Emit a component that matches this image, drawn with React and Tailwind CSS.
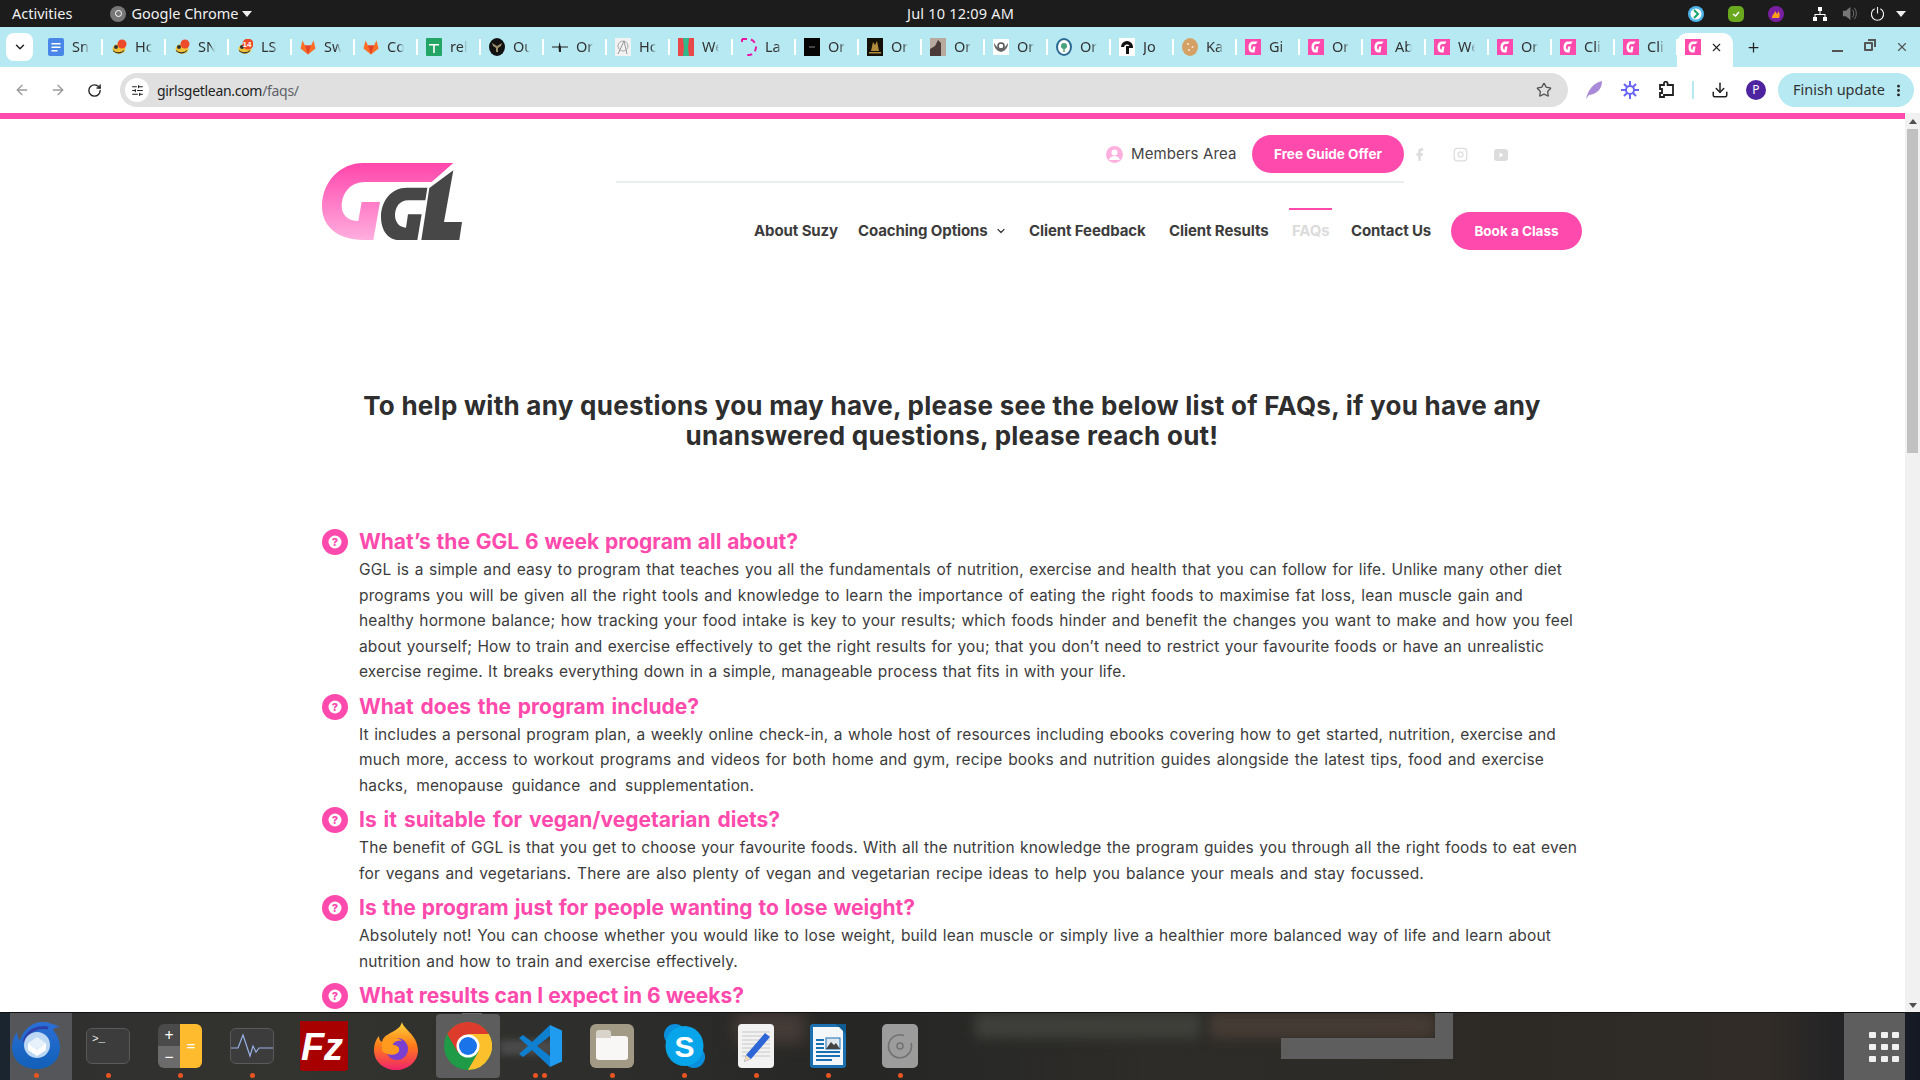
import React from "react";
import { ArrowLeft, ArrowRight, RotateCw, Star, Download, X, Plus, ChevronDown, Facebook, Instagram, EllipsisVertical, SlidersHorizontal } from "lucide-react";

const G = () => (
  <svg width="16" height="16" viewBox="0 0 16 16"><rect width="16" height="16" fill="#ff4aad" /><path d="M12.5 2.5H8C5 2.5 3.5 5 3.5 8.5C3.5 11.5 5 13.5 7.5 13.5H9.5L10.5 7.5H8L7.5 11C6.5 10.5 6 9.500 6 8.500C6 6 7 5 8.500 5H11Z" fill="#fff" /></svg>
);
const Fav = ({ k }) => {
  if (k === "g") return <G />;
  if (k === "doc") return <svg width="16" height="18" viewBox="0 0 16 18"><rect width="16" height="18" rx="2" fill="#4a86e8" /><path d="M3.500 5h9v1.500h-9zM3.500 8.500h9V10h-9zM3.500 12h6v1.500h-6z" fill="#fff" /></svg>;
  if (k === "duck" || k === "duck2" || k === "duck14") return (
    <svg width="16" height="16" viewBox="0 0 16 16"><ellipse cx="8" cy="10" rx="6.500" ry="5" fill="#f0c23a" /><path d="M2 11c3 3 8 3 11 0v1c-3 3.500-8 3-11 0z" fill="#333" /><circle cx="5" cy="8" r="2" fill="#333" />
      <circle cx="11" cy="5" r={k === "duck14" ? 5.500 : 4.500} fill="#ee4b2b" />{k === "duck14" && <text x="10" y="8" fontSize="8" fontFamily="Liberation Sans" fontWeight="700" textAnchor="middle" fill="#fff">14</text>}</svg>
  );
  if (k === "gitlab") return <svg width="16" height="18" viewBox="0 0 16 16"><path d="M8 15.500L.500 9.500 2.500 1.500 5 6.500h6l2.500-5 2 8z" fill="#fc6d26" /><path d="M8 15.500L5 6.500h6z" fill="#e24329" /></svg>;
  if (k === "sheet") return <svg width="16" height="18" viewBox="0 0 16 18"><rect width="16" height="18" rx="1" fill="#23a566" /><path d="M3 6h10v1.500H8.800V15H7.200V7.500H3z" fill="#fff" /></svg>;
  if (k === "y") return <svg width="16" height="18" viewBox="0 0 16 18"><ellipse cx="8" cy="9" rx="8" ry="9" fill="#111" /><path d="M3 5l5 3 5-3-1 3-3 2v4H7v-4L4 8z" fill="#9a8f6a" /></svg>;
  if (k === "plane") return <svg width="16" height="16" viewBox="0 0 16 16"><path d="M0 8h16" stroke="#222" strokeWidth="1" /><path d="M7.500 3L6.500 8.500 7 13h2V8.500z" fill="#222" /></svg>;
  if (k === "sketch") return <svg width="16" height="18" viewBox="0 0 16 18"><rect width="16" height="18" fill="#f2f2f2" /><circle cx="8" cy="8" r="5" fill="none" stroke="#aaa" /><path d="M3 16L9 3l3 13" fill="none" stroke="#999" /></svg>;
  if (k === "we") return <svg width="16" height="18" viewBox="0 0 16 18"><rect width="16" height="18" fill="#e8484a" /><path d="M5 0h6l-1 10 1 8H5l1-8z" fill="#2fb98a" /></svg>;
  if (k === "la") return <svg width="16" height="18" viewBox="0 0 16 18"><path d="M1 1v3M1 1h7a8 8 0 0 1 7 8c0 4-3 8-7 8H3" fill="none" stroke="#e815a5" strokeWidth="2" strokeDasharray="5 4" /></svg>;
  if (k === "black") return <svg width="16" height="18" viewBox="0 0 16 18"><rect width="16" height="18" fill="#050505" /><rect x="5" y="8" width="6" height="2" fill="#444" /></svg>;
  if (k === "gold") return <svg width="16" height="18" viewBox="0 0 16 18"><rect width="16" height="18" fill="#141008" /><path d="M4 13l2-9 2 3 2-4 2 10z" fill="#b08b3c" /><rect x="2" y="14" width="12" height="1.500" fill="#b08b3c" /></svg>;
  if (k === "photo") return <svg width="16" height="18" viewBox="0 0 16 18"><rect width="16" height="18" fill="#b9aaa0" /><path d="M0 18V11l5-3 3-6 3 3v13z" fill="#4a3a38" /></svg>;
  if (k === "wings") return <svg width="16" height="16" viewBox="0 0 16 16"><rect width="16" height="16" fill="#fff" /><circle cx="8" cy="7" r="3" fill="none" stroke="#555" strokeWidth="1.500" /><path d="M1 4c0 5 3 8 7 9 4-1 7-4 7-9l-3 4-4 2-4-2z" fill="#666" /></svg>;
  if (k === "tree") return <svg width="16" height="18" viewBox="0 0 16 18"><ellipse cx="8" cy="9" rx="7" ry="8" fill="#fff" stroke="#2c6a94" strokeWidth="2" /><circle cx="8" cy="8" r="3" fill="#4aa27a" /><rect x="7.300" y="10" width="1.400" height="4" fill="#4aa27a" /></svg>;
  if (k === "jo") return <svg width="16" height="18" viewBox="0 0 16 18"><rect width="16" height="18" fill="#fff" /><path d="M2 9a6 6 0 0 1 12 0v1h-4v6H7V8h3.500A3 3 0 0 0 5 9z" fill="#111" /></svg>;
  if (k === "cookie") return <svg width="16" height="18" viewBox="0 0 16 18"><ellipse cx="8" cy="9" rx="8" ry="9" fill="#d5a063" /><circle cx="6" cy="6" r="1" fill="#fbe9d4" /><circle cx="10.500" cy="9" r="1" fill="#fbe9d4" /><circle cx="7" cy="12" r="1" fill="#fbe9d4" /></svg>;
  return null;
};

const tabs = [
  ["doc", "Sn"], ["duck", "Hc"], ["duck2", "SN"], ["duck14", "LS"], ["gitlab", "Sw"], ["gitlab", "Co"], ["sheet", "rel"], ["y", "Ou"], ["plane", "Or"],
  ["sketch", "Hc"], ["we", "We"], ["la", "La"], ["black", "Or"], ["gold", "Or"], ["photo", "Or"], ["wings", "Or"], ["tree", "Or"], ["jo", "Jo"], ["cookie", "Ka"],
  ["g", "Gi"], ["g", "Or"], ["g", "Ab"], ["g", "We"], ["g", "Or"], ["g", "Cli"], ["g", "Cli"],
];

const faqs = [
  ["What’s the GGL 6 week program all about?", "w-[439px]", [
    ["GGL is a simple and easy to program that teaches you all the fundamentals of nutrition, exercise and health that you can follow for life. Unlike many other diet", "w-[1203px]"],
    ["programs you will be given all the right tools and knowledge to learn the importance of eating the right foods to maximise fat loss, lean muscle gain and", "w-[1164px]"],
    ["healthy hormone balance; how tracking your food intake is key to your results; which foods hinder and benefit the changes you want to make and how you feel", "w-[1214px]"],
    ["about yourself; How to train and exercise effectively to get the right results for you; that you don’t need to restrict your favourite foods or have an unrealistic", "w-[1185px]"],
    ["exercise regime. It breaks everything down in a simple, manageable process that fits in with your life.", "w-[767px]"],
  ]],
  ["What does the program include?", "w-[340px]", [
    ["It includes a personal program plan, a weekly online check-in, a whole host of resources including ebooks covering how to get started, nutrition, exercise and", "w-[1197px]"],
    ["much more, access to workout programs and videos for both home and gym, recipe books and nutrition guides alongside the latest tips, food and exercise", "w-[1185px]"],
    ["hacks, menopause guidance and supplementation.", "w-[395px]"],
  ]],
  ["Is it suitable for vegan/vegetarian diets?", "w-[421px]", [
    ["The benefit of GGL is that you get to choose your favourite foods. With all the nutrition knowledge the program guides you through all the right foods to eat even", "w-[1218px]"],
    ["for vegans and vegetarians. There are also plenty of vegan and vegetarian recipe ideas to help you balance your meals and stay focussed.", "w-[1065px]"],
  ]],
  ["Is the program just for people wanting to lose weight?", "w-[556px]", [
    ["Absolutely not! You can choose whether you would like to lose weight, build lean muscle or simply live a healthier more balanced way of life and learn about", "w-[1192px]"],
    ["nutrition and how to train and exercise effectively.", "w-[379px]"],
  ]],
  ["What results can I expect in 6 weeks?", "w-[385px]", []],
];

const font = "[font-family:Inter,'Liberation_Sans',sans-serif]";

const Logo = () => (
  <svg width="140" height="77" viewBox="66 128 420 231">
    <defs><linearGradient id="lg" x1="0" y1="0" x2="0" y2="1"><stop offset="0" stopColor="#ff46ab" /><stop offset="1" stopColor="#ffaee0" /></linearGradient></defs>
    <path d="M190 128H460L395 185H195C150 185 125 220 125 258C125 285 145 302 175 302L185 245H240L220 359H190C115 359 66 320 66 258C66 185 120 128 190 128Z" fill="url(#lg)" />
    <path d="M320 202H382L376 240H325C298 240 285 262 285 285C285 305 298 322 318 322L324 282H365L352 359H295C265 359 243 330 243 290C243 240 275 202 320 202Z" fill="#474747" />
    <path d="M460 150L432 305H486L478 359H364L388 203Z" fill="#474747" />
  </svg>
);

const QMark = () => (
  <svg width="26" height="26" viewBox="0 0 26 26"><circle cx="13" cy="13" r="13" fill="#ff4aad" /><circle cx="13" cy="13" r="6.500" fill="#fff" /><text x="13" y="17" textAnchor="middle" fontSize="11" fontWeight="800" fontFamily="Inter" fill="#ff4aad">?</text></svg>
);

const NavItem = ({ children, w, active }) => (
  <div className={`relative text-[15px] font-bold tracking-[-0.1px] whitespace-nowrap ${active ? "text-[#dcdcdc]" : "text-[#3c3c3c]"} ${w}`}>
    {active && <div className="absolute left-[-3px] w-[43px] top-[-12px] h-[2px] bg-[#ff4aad]" />}
    {children}
  </div>
);

const dockDot = "w-[5px] h-[5px] rounded-full bg-[#e95420]";

const Dock = () => {
  const items = [
    [1, <svg width="48" height="47" viewBox="0 0 48 47"><defs><linearGradient id="tb" x1="0" y1="0" x2="0" y2="1"><stop offset="0" stopColor="#2a6fd6" /><stop offset="1" stopColor="#1160b8" /></linearGradient></defs><path d="M30 0c6 0 12 2 18 5-4 0-6 1-7 3 5 6 7 11 7 18 0 12-10 21-23 21C10 47 0 38 0 25 0 20 2 14 5 10c0 4 1 7 3 9 2-9 11-19 22-19z" fill="url(#tb)" /><path d="M12 20C15 9 25 4 36 6" fill="none" stroke="#2f3fa8" strokeWidth="3" /><circle cx="25" cy="23" r="13" fill="#bcd8f3" /><path d="M16 21l9 7 9-7v7l-9 6-9-6z" fill="#fff" /><path d="M16 21l9-6 9 6-9 7z" fill="#e6f1fb" /></svg>],
    [1, <div className="w-[44px] h-[36px] rounded-[6px] bg-[#3c3c3c] border border-[#5a5a5a] text-[#eee] text-[11px] leading-none pt-[5px] pl-[5px] [font-family:'Liberation_Mono',monospace]">&gt;_</div>],
    [1, <div className="w-[44px] h-[44px] rounded-[6px] overflow-hidden flex"><div className="w-[22px] flex flex-col"><div className="h-[22px] bg-[#4a4a4a] text-white text-[16px] leading-[22px] text-center">+</div><div className="h-[22px] bg-[#6b6b6b] text-white text-[16px] leading-[22px] text-center">−</div></div><div className="w-[22px] bg-[#fdbb2d] text-white text-[16px] leading-[44px] text-center">=</div></div>],
    [1, <div className="w-[44px] h-[36px] rounded-[6px] bg-[#3c3c3c] border border-[#5a5a5a] flex items-center"><svg width="42" height="30" viewBox="0 0 42 30"><path d="M0 17H7L12 4l7 21 3-10 3 6 3-4H42" fill="none" stroke="#9ab2e8" strokeWidth="1.200" /></svg></div>],
    [0, <svg width="48" height="50" viewBox="0 0 48 50"><rect x="1.500" y="1.500" width="45" height="47" fill="#a80000" stroke="#a80000" strokeWidth="3" strokeDasharray="3 2.500" strokeLinecap="round" /><text x="22" y="39" textAnchor="middle" fontSize="38" fontWeight="700" fontStyle="italic" fontFamily="Liberation Sans" fill="#fff">Fz</text></svg>],
    [0, <svg width="46" height="48" viewBox="0 0 46 48"><defs><linearGradient id="ff" x1="0" y1="0" x2="0" y2="1"><stop offset="0" stopColor="#ffd43a" /><stop offset=".5" stopColor="#ff7a1a" /><stop offset="1" stopColor="#f0246b" /></linearGradient></defs><path d="M29 0c1 7 15 12 16 28 0 12-10 20-22 20S1 40 1 28c0-7 3-12 5-14 0 3 1 5 3 6 1-7 10-9 15-13 3-2 4-4 5-7z" fill="url(#ff)" /><circle cx="24" cy="27" r="11" fill="#7b3fd0" /><path d="M9 20c5-6 15-6 20-1-6-1-9 2-9 4 4 0 7 2 6 6-2 5-11 5-17 0z" fill="#ff9a1f" /></svg>],
    [0, <svg width="48" height="48" viewBox="0 0 48 48"><circle cx="24" cy="24" r="24" fill="#1f9a47" /><path d="M44.800 12L24 12L34.400 30L24 48A24 24 0 0 0 44.800 12Z" fill="#fcc02c" /><path d="M44.800 12A24 24 0 0 0 3.200 12L13.600 30L24 12Z" fill="#dd3b2c" /><circle cx="24" cy="24" r="11.500" fill="#fff" /><circle cx="24" cy="24" r="9" fill="#1a73e8" /></svg>],
    [2, <svg width="43" height="42" viewBox="0 0 43 42"><path d="M31 0L13 17 4 10 0 13 9 21 0 29 4 32 13 25 31 42V31L18 21 31 11Z" fill="#0f7fd0" /><path d="M31 0L43 5.500V36.500L31 42Z" fill="#1f9cf0" /></svg>],
    [1, <div className="relative w-[44px] h-[44px] rounded-[6px] bg-[#a39a86] flex items-center justify-center"><div className="relative w-[32px] h-[24px] mt-[4px] rounded-[3px] bg-[#f8f7f5]"><div className="absolute top-[-6px] left-0 w-[15px] h-[8px] rounded-t-[3px] bg-[#d8d4cb]" /></div></div>],
    [1, <svg width="41" height="44" viewBox="0 0 41 44"><circle cx="11" cy="11" r="11" fill="#0a8fdc" /><circle cx="30" cy="33" r="11" fill="#0a8fdc" /><ellipse cx="20.500" cy="22" rx="19" ry="20" fill="#08a5ea" /><text x="20.500" y="33" textAnchor="middle" fontSize="30" fontWeight="700" fontFamily="Liberation Sans" fill="#fff">S</text></svg>],
    [1, <svg width="36" height="44" viewBox="0 0 36 44"><rect width="36" height="44" rx="4" fill="#f2f2f2" /><path d="M4 8h28M4 12h28M4 16h28M4 20h28M4 24h28M4 28h28M4 32h28" stroke="#c8c8c8" /><path d="M27 9l5 4-19 22-7 3 2-7z" fill="#2d66d6" /><path d="M8 31l5 4-7 3z" fill="#eed9b8" /></svg>],
    [1, <svg width="36" height="44" viewBox="0 0 36 44"><path d="M0 3a3 3 0 0 1 3-3h23l10 9v32a3 3 0 0 1-3 3H3a3 3 0 0 1-3-3z" fill="#1a70b0" /><rect x="3" y="3" width="30" height="38" fill="#f3f7fa" /><path d="M26 0h10v10z" fill="#0f5c93" /><rect x="16" y="14" width="14" height="11" fill="#dfe8ef" stroke="#1a70b0" /><path d="M16 25l5-7 3 3 2-2 4 6z" fill="#444" /><path d="M6 28h24M6 32h24M6 36h16M6 16h8M6 20h8M6 24h8" stroke="#1a70b0" strokeWidth="2" /></svg>],
    [1, <div className="w-[36px] h-[44px] rounded-[5px] bg-[#9c9c9c] flex items-center justify-center"><svg width="26" height="26" viewBox="0 0 26 26" fill="none" stroke="#727272" strokeWidth="1.600"><path d="M17 2.500A11.500 11.500 0 1 0 24 10" /><circle cx="13" cy="13" r="3" /></svg></div>],
  ];
  return (
    <div className="relative h-[68px] border-t border-[#111] bg-[linear-gradient(90deg,#2f2f2f_0%,#33332f_15%,#2e2e2c_30%,#262624_45%,#2d2c29_60%,#2d2a25_80%,#312c27_92%,#141a25_100%)] overflow-hidden flex">
      <div className="absolute left-0 top-0 w-[10px] h-full bg-[#1a2530]" />
      <div className="absolute left-[462px] top-0 w-[20px] h-[30px] bg-[#6a6a6a]" />
      <div className="absolute left-[500px] top-[27px] w-[60px] h-[15px] bg-[#4a4a4a] blur-[3px]" />
      <div className="absolute left-[735px] top-0 w-[70px] h-[30px] bg-[#473c37] blur-[8px]" />
      <div className="absolute left-[975px] top-0 w-[225px] h-[25px] bg-[#3f403b] blur-[6px]" />
      <div className="absolute left-[1210px] top-0 w-[225px] h-[25px] bg-[#463c34] blur-[6px]" />
      <div className="absolute left-[1281px] top-[25px] w-[172px] h-[21px] bg-[#5e5e5e]" />
      <div className="absolute left-[1435px] top-0 w-[18px] h-[46px] bg-[#5e5e5e]" />
      {items.map(([dots, icon], i) => (
        <div key={i} className="relative w-[72px] h-[67px] flex items-center justify-center shrink-0">
          {i === 0 && <div className="absolute left-[10px] right-0 top-0 bottom-0 bg-[#55565a]" />}
          {i === 6 && <div className="absolute left-[4px] top-[1px] w-[64px] h-[64px] rounded-[4px] bg-[#5d5d5d]" />}
          <div className="relative -mt-[2px] flex items-center justify-center">{icon}</div>
          {dots > 0 && (
            <div className="absolute bottom-[2px] left-0 right-0 flex justify-center gap-[4px]">
              <div className={dockDot} />{dots > 1 && <div className={dockDot} />}
            </div>
          )}
        </div>
      ))}
      <div className="relative ml-auto mr-[15px] w-[61px] h-full bg-[#5e5e5e] grid grid-cols-3 gap-x-[5px] gap-y-[6px] content-center justify-center pl-[25px] pr-[6px]">
        {Array.from({ length: 9 }).map((_, i) => (
          <div key={i} className="w-[7px] h-[6px] rounded-[1px] bg-[#f0f0f0]" />
        ))}
      </div>
    </div>
  );
};

export default function App() {
  const ui = "[font-family:'Noto_Sans',sans-serif]";
  return (
    <div className="w-[1920px] h-[1080px] overflow-hidden flex flex-col bg-white">
      <div className={`h-[27px] bg-[#1c1c1c] text-[#f0f0f0] text-[14.500px] relative flex items-center ${ui}`}>
        <span className="ml-[12px]">Activities</span>
        <span className="ml-[38px] w-[16px] h-[16px] rounded-full bg-[#777] flex items-center justify-center"><span className="w-[7px] h-[7px] rounded-full border border-white" /></span>
        <span className="ml-[5px]">Google Chrome</span>
        <span className="ml-[4px] w-0 h-0 border-x-[5px] border-x-transparent border-t-[6px] border-t-[#eee]" />
        <span className="absolute left-[907px] top-[3px] tracking-[0.2px]">Jul 10  12:09 AM</span>
        <div className="ml-auto flex items-center">
          <svg className="mr-[24px]" width="16" height="16" viewBox="0 0 16 16"><circle cx="8" cy="8" r="8" fill="#4fb3e8" /><circle cx="8" cy="8" r="5.500" fill="#fff" /><path d="M6 4l4 4-4 4" stroke="#14a46c" strokeWidth="2" fill="none" /></svg>
          <svg className="mr-[24px]" width="16" height="16" viewBox="0 0 16 16"><rect width="16" height="16" rx="5" fill="#6aa81e" /><path d="M5 8l2.500 2L11 6" stroke="#fff" strokeWidth="1.500" fill="none" /></svg>
          <svg className="mr-[28px]" width="16" height="16" viewBox="0 0 16 16"><circle cx="8" cy="8" r="8" fill="#7b1fa2" /><path d="M4 12c0-4 3-4 3-7 1 1 1 2 2 3 1-1 1-2 1-3 2 2 2 5 1 7z" fill="#ff9f1c" /></svg>
          <svg className="mr-[14px]" width="16" height="16" viewBox="0 0 16 16" fill="#fff"><rect x="6" y="1" width="4" height="4" /><rect x="1" y="11" width="4" height="4" /><rect x="11" y="11" width="4" height="4" /><path d="M7.500 5h1v3h5v3h-1V9h-9v2h-1V8h5z" /></svg>
          <svg className="mr-[13px]" width="15" height="15" viewBox="0 0 16 16" fill="#777"><path d="M1 5h3l5-4v14l-5-4H1z" /><path d="M11 4c2 2 2 6 0 8M13 2c3 3 3 9 0 12" stroke="#777" fill="none" /></svg>
          <svg className="mr-[11px]" width="15" height="15" viewBox="0 0 16 16" fill="none" stroke="#eee" strokeWidth="1.200"><path d="M5 3a6.500 6.500 0 1 0 6 0M8 1v7" /></svg>
          <span className="mr-[14px] w-0 h-0 border-x-[5px] border-x-transparent border-t-[6px] border-t-[#eee]" />
        </div>
      </div>

      <div className={`h-[40px] bg-[#b6e9f2] flex items-start pt-[6px] text-[14.500px] text-[#333] ${ui}`}>
        <div className="ml-[6px] w-[27px] h-[28px] rounded-[8px] bg-white flex items-center justify-center"><ChevronDown size={14} strokeWidth={2.500} color="#222" /></div>
        <div className="ml-[7px] flex">
          {tabs.map(([k, l], i) => (
            <div key={i} className="relative w-[63px] h-[28px] pl-[8px] flex items-center shrink-0">
              <Fav k={k} />
              <span className="ml-[8px] w-[17px] overflow-hidden whitespace-nowrap [mask-image:linear-gradient(90deg,#000_70%,transparent)]">{l}</span>
              <div className="absolute right-0 top-[6px] h-[16px] w-[2px] bg-white" />
            </div>
          ))}
        </div>
        <div className="ml-[-1px] w-[56px] h-[34px] bg-white rounded-t-[10px] pl-[8px] pb-[6px] flex items-center relative">
          <G /><X size={13} strokeWidth={2} className="ml-[9px]" color="#222" />
        </div>
        <Plus size={15} strokeWidth={2} color="#222" className="ml-[13px] mt-[7px]" />
        <div className="ml-[71px] mt-[17px] w-[11px] h-[2px] bg-[#555]" />
        <div className="relative ml-[21px] mt-[9px] w-[9px] h-[9px] border-2 border-[#555] rounded-[1px]">
          <div className="absolute left-[2px] top-[-5px] w-[8px] h-[8px] border-t-2 border-r-2 border-[#555]" />
        </div>
        <X size={14} strokeWidth={2} color="#555" className="ml-[22px] mt-[7px]" />
      </div>

      <div className={`h-[46px] bg-white rounded-t-[8px] flex items-center text-[#333] ${ui}`}>
        <ArrowLeft size={16} color="#9a9a9a" className="ml-[14px]" />
        <ArrowRight size={16} color="#9a9a9a" className="ml-[20px]" />
        <RotateCw size={15} strokeWidth={2.200} color="#222" className="ml-[21px]" />
        <div className="ml-[18px] w-[1448px] h-[34px] rounded-full bg-[#e0e0e0] flex items-center">
          <div className="ml-[5px] w-[24px] h-[24px] rounded-full bg-white flex items-center justify-center"><SlidersHorizontal size={13} color="#222" /></div>
          <span className="ml-[8px] text-[14px] text-[#222] tracking-[-0.3px]">girlsgetlean.com<span className="text-[#5f6368]">/faqs/</span></span>
          <Star size={16} strokeWidth={2} color="#555" className="ml-auto mr-[16px]" />
        </div>
        <svg className="ml-[17px]" width="18" height="20" viewBox="0 0 18 20"><path d="M1 19C3 10 8 3 17 1c0 8-5 13-13 14z" fill="#a98ad8" /></svg>
        <svg className="ml-[18px]" width="18" height="18" viewBox="0 0 18 18" stroke="#6a66f5" strokeWidth="2"><path d="M9 0v18M0 9h18M3 3l12 12M15 3L3 15" /><circle cx="9" cy="9" r="4" fill="#fff" /></svg>
        <svg className="ml-[19px]" width="18" height="18" viewBox="0 0 18 18" fill="none" stroke="#222" strokeWidth="1.800"><path d="M2 4h4V2.500a1.800 1.800 0 0 1 3.600 0V4H15v10H6v2H2v-4h2V8H2z" /></svg>
        <div className="ml-[16px] w-[2px] h-[18px] bg-[#b6e9f2]" />
        <Download size={18} strokeWidth={2} color="#222" className="ml-[17px]" />
        <div className="ml-[17px] w-[20px] h-[20px] rounded-full bg-[#4e23a0] text-white text-[12px] flex items-center justify-center">P</div>
        <div className="ml-[12px] w-[136px] h-[34px] rounded-full bg-[#b6e9f2] flex items-center pl-[15px] text-[14.500px] text-[#333] shrink-0 whitespace-nowrap">
          Finish update<EllipsisVertical size={15} strokeWidth={2.500} color="#222" className="ml-[6px]" />
        </div>
      </div>

      <div className="flex-1 min-h-0 flex">
        <div className={`flex-1 min-w-0 overflow-hidden ${font}`}>
          <div className="h-[6px] bg-[#ff4aad]" />
          <div className="w-[1260px] ml-[322px] relative">
            <div className="flex h-[131px]">
              <div className="w-[295px] pt-[44px]"><Logo /></div>
              <div className="flex-1 flex flex-col">
                <div className="h-[64px] shrink-0 border-b-2 border-[#e9eff0] pt-[8px] flex items-center justify-end w-[788px]">
                  <div className="w-[17px] h-[17px] rounded-full bg-[#ffb0de] flex items-center justify-center overflow-hidden"><svg width="17" height="17" viewBox="0 0 17 17"><circle cx="8.500" cy="6.500" r="3" fill="#fff" /><path d="M3 14c1-3 3-4 5.500-4s4.500 1 5.500 4z" fill="#fff" /></svg></div>
                  <span className="ml-[8px] text-[15px] text-[#444] w-[121px] whitespace-nowrap tracking-[0.1px]">Members Area</span>
                  <div className="w-[152px] h-[38px] rounded-full bg-[#ff4aad] text-white text-[13.500px] font-bold flex items-center justify-center">Free Guide Offer</div>
                </div>
                <div className="flex items-center h-[38px] shrink-0 mt-[29px] ml-[138px]">
                  <NavItem w="w-[104px]">About Suzy</NavItem>
                  <NavItem w="w-[171px]"><span className="inline-flex items-center">Coaching Options<ChevronDown size={12} strokeWidth={2.500} className="ml-[7px]" /></span></NavItem>
                  <NavItem w="w-[140px]">Client Feedback</NavItem>
                  <NavItem w="w-[123px]">Client Results</NavItem>
                  <NavItem w="w-[59px]" active>FAQs</NavItem>
                  <NavItem w="w-[100px]">Contact Us</NavItem>
                  <div className="w-[131px] h-[38px] rounded-full bg-[#ff4aad] text-white text-[13.500px] font-bold flex items-center justify-center shrink-0">Book a Class</div>
                </div>
              </div>
            </div>
            <div className="absolute left-[1090px] top-[28px] flex items-center text-[#dcdcdc]">
              <Facebook size={15} fill="#dcdcdc" strokeWidth={0} />
              <Instagram size={15} strokeWidth={2} className="ml-[26px]" />
              <svg className="ml-[26px]" width="14" height="12" viewBox="0 0 14 12"><rect width="14" height="12" rx="3" fill="#dcdcdc" /><path d="M5.500 3.500l4 2.500-4 2.500z" fill="#fff" /></svg>
            </div>
            <div className="pt-[141px] text-center text-[26px] leading-[29.500px] font-bold text-[#2e2e2e] tracking-[0.26px]">
              <div className="whitespace-nowrap">To help with any questions you may have, please see the below list of FAQs, if you have any</div>
              <div className="whitespace-nowrap">unanswered questions, please reach out!</div>
            </div>
            <div className="pt-[77px] flex flex-col gap-[7px]">
              {faqs.map(([q, w, lines], i) => (
                <div key={i} className="flex">
                  <div className="w-[37px] shrink-0 pt-[2px]"><QMark /></div>
                  <div>
                    <div className={`text-[21px] leading-[30px] font-bold text-[#ff4aad] whitespace-nowrap ${w} [text-align-last:justify]`}>{q}</div>
                    {lines.map(([t, lw], j) => (
                      <div key={j} className={`text-[15.500px] leading-[25.500px] tracking-[0.15px] text-[#3c3c3c] whitespace-nowrap ${lw} [text-align-last:justify]`}>{t}</div>
                    ))}
                  </div>
                </div>
              ))}
            </div>
          </div>
        </div>
        <div className="w-[15px] bg-[#f1f1f1] flex flex-col items-center relative">
          <div className="mt-[6px] w-0 h-0 border-x-[4px] border-x-transparent border-b-[5px] border-b-[#505050]" />
          <div className="mt-[5px] w-[11px] h-[324px] bg-[#c1c1c1]" />
          <div className="mt-auto mb-[4px] w-0 h-0 border-x-[4px] border-x-transparent border-t-[5px] border-t-[#505050]" />
        </div>
      </div>
      <Dock />
    </div>
  );
}
